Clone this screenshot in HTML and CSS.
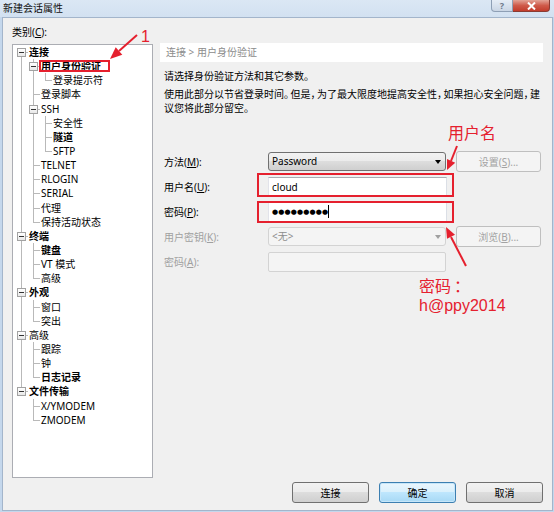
FILE: index.html
```html
<!DOCTYPE html>
<html lang="zh-CN">
<head>
<meta charset="utf-8">
<title>新建会话属性</title>
<link rel="stylesheet" href="styles.css">
</head>
<body>
<div class="win">
  <div class="titlebar">
    <span class="title">新建会话属性</span>
    <div class="caps">
      <span class="cap help">?</span>
      <span class="cap close"><svg width="11" height="8" viewBox="0 0 11 8"><path d="M2 0.5 L9 7.5 M9 0.5 L2 7.5" stroke="#fff" stroke-width="2"/></svg></span>
    </div>
  </div>
  <div class="client">
    <div class="main">
      <div class="left">
        <div class="cat">类别(<u>C</u>):</div>
        <ul class="tree">
          <li><div class="row"><i class="exp"></i><b>连接</b></div>
            <ul>
              <li><div class="row"><i class="exp"></i><b>用户身份验证</b></div>
                <ul>
                  <li><div class="row">登录提示符</div></li>
                </ul>
              </li>
              <li><div class="row">登录脚本</div></li>
              <li><div class="row"><i class="exp"></i>SSH</div>
                <ul>
                  <li><div class="row">安全性</div></li>
                  <li><div class="row"><b>隧道</b></div></li>
                  <li><div class="row">SFTP</div></li>
                </ul>
              </li>
              <li><div class="row">TELNET</div></li>
              <li><div class="row">RLOGIN</div></li>
              <li><div class="row">SERIAL</div></li>
              <li><div class="row">代理</div></li>
              <li><div class="row">保持活动状态</div></li>
            </ul>
          </li>
          <li><div class="row"><i class="exp"></i><b>终端</b></div>
            <ul>
              <li><div class="row"><b>键盘</b></div></li>
              <li><div class="row">VT 模式</div></li>
              <li><div class="row">高级</div></li>
            </ul>
          </li>
          <li><div class="row"><i class="exp"></i><b>外观</b></div>
            <ul>
              <li><div class="row">窗口</div></li>
              <li><div class="row">突出</div></li>
            </ul>
          </li>
          <li><div class="row"><i class="exp"></i>高级</div>
            <ul>
              <li><div class="row">跟踪</div></li>
              <li><div class="row">钟</div></li>
              <li><div class="row"><b>日志记录</b></div></li>
            </ul>
          </li>
          <li><div class="row"><i class="exp"></i><b>文件传输</b></div>
            <ul>
              <li><div class="row">X/YMODEM</div></li>
              <li><div class="row">ZMODEM</div></li>
            </ul>
          </li>
        </ul>
      </div>
      <div class="panel">
        <div class="crumb">连接 &gt; 用户身份验证</div>
        <p class="desc first">请选择身份验证方法和其它参数。</p>
        <p class="desc">使用此部分以节省登录时间<span class="p">。</span>但是<span class="p">，</span>为了最大限度地提高安全性<span class="p">，</span>如果担心安全问题<span class="p">，</span>建<br>议您将此部分留空。</p>
        <div class="form">
          <label>方法(<u>M</u>):</label>
          <div class="combo"><span>Password</span><i class="arrow"></i></div>
          <div class="btn dis">设置(<u>S</u>)...</div>

          <label>用户名(<u>U</u>):</label>
          <div class="input"><span>cloud</span></div>
          <div></div>

          <label>密码(<u>P</u>):</label>
          <div class="input"><span class="pw">●●●●●●●●●</span><i class="caret"></i></div>
          <div></div>

          <label class="dim">用户密钥(<u>K</u>):</label>
          <div class="combo dis"><span>&lt;无&gt;</span><i class="arrow"></i></div>
          <div class="btn dis">浏览(<u>B</u>)...</div>

          <label class="dim">密码(<u>A</u>):</label>
          <div class="box dis"></div>
          <div></div>
        </div>
      </div>
    </div>
    <div class="buttons">
      <div class="btn">连接</div>
      <div class="btn default">确定</div>
      <div class="btn">取消</div>
    </div>
  </div>

  <div class="annot">
    <svg class="marks" width="554" height="512" viewBox="0 0 554 512">
      <g fill="none" stroke="#e5202e" stroke-width="2">
        <rect x="40" y="61" width="69" height="10"/>
        <rect x="258" y="174" width="195" height="22"/>
        <rect x="258" y="202" width="195" height="20"/>
        <line x1="137" y1="35" x2="119" y2="51"/>
        <line x1="457" y1="146" x2="451" y2="161"/>
        <line x1="466" y1="266" x2="451" y2="237"/>
      </g>
      <g fill="#e5202e">
        <polygon points="110,59 122.3,54.7 115.7,47.3"/>
        <polygon points="447,170 455.2,162.8 447,159"/>
        <polygon points="446,227 455,234.7 447,238.8"/>
      </g>
    </svg>
    <div class="note one">1</div>
    <div class="note user">用户名</div>
    <div class="note pwd">密码<span class="colon">：</span><br><span class="lat">h@ppy2014</span></div>
  </div>
</div>
</body>
</html>
```
FILE: styles.css
```css
html, body {
  margin: 0;
  padding: 0;
}
body {
  width: 554px;
  height: 512px;
  overflow: hidden;
  font-family: "Noto Sans", "Noto Sans CJK SC", sans-serif;
  font-size: 10px;
  color: #000;
}
.win {
  width: 554px;
  height: 512px;
  position: relative;
  display: flex;
  flex-direction: column;
  background: #c4d7ec;
}
.titlebar {
  height: 17px;
  flex: none;
  display: flex;
  justify-content: space-between;
  align-items: flex-start;
  background: linear-gradient(#dbe7f4, #d2e1f1);
}
.title {
  padding-left: 3px;
  line-height: 17px;
  color: #111;
}
.caps {
  display: flex;
  margin-right: 4px;
}
.cap {
  height: 12px;
  box-sizing: border-box;
  display: flex;
  align-items: center;
  justify-content: center;
}
.help {
  width: 22px;
  border: 1px solid #8e9fb5;
  border-top: none;
  border-radius: 0 0 0 4px;
  background: linear-gradient(#e6edf6, #cad6e5);
  color: #6d7a8c;
  font-size: 9px;
  font-weight: bold;
  line-height: 10px;
}
.close {
  width: 37px;
  border: 1px solid #8a3b33;
  border-top: none;
  border-left: none;
  border-radius: 0 0 4px 0;
  background: linear-gradient(#e3a396, #cf5a4a 50%, #c23c2c);
}
.client {
  flex: 1;
  margin: 0 1px 1px 2px;
  border: 1px solid #a3b5cb;
  background: #f0f0f0;
  padding: 7px 9px 0 9px;
  display: flex;
  flex-direction: column;
}
.main {
  display: flex;
  gap: 7px;
}
.left {
  width: 141px;
  flex: none;
}
.cat {
  height: 14px;
  line-height: 14px;
  margin-bottom: 5px;
}
.tree, .tree ul {
  list-style: none;
  margin: 0;
  padding: 0;
}
.tree {
  box-sizing: border-box;
  height: 434px;
  background: #fff;
  border: 1px solid #abadb3;
  overflow: hidden;
}
.tree ul {
  margin-left: -4px;
}
.tree li {
  position: relative;
  padding-left: 16px;
}
.tree li::before {
  content: "";
  position: absolute;
  left: 8px;
  top: 0;
  bottom: 0;
  border-left: 1px solid #b9b9b9;
}
.tree li:last-child::before {
  bottom: auto;
  height: 7px;
}
.tree > li:first-child::before {
  top: 7px;
}
.row {
  position: relative;
  height: 14.15px;
  line-height: 14.15px;
  white-space: nowrap;
}
.row::before {
  content: "";
  position: absolute;
  left: -8px;
  top: 7px;
  width: 7px;
  border-top: 1px solid #b9b9b9;
}
.row b {
  font-weight: bold;
}
.exp {
  position: absolute;
  z-index: 1;
  left: -12px;
  top: 3px;
  width: 9px;
  height: 9px;
  box-sizing: border-box;
  border: 1px solid #a2a2a2;
  background: linear-gradient(#fff, #e8e8e8);
}
.exp::after {
  content: "";
  position: absolute;
  left: 1px;
  top: 3px;
  width: 5px;
  height: 1px;
  background: #333;
}
.panel {
  flex: 1;
  margin-top: 18px;
}
.crumb {
  height: 19px;
  line-height: 19px;
  background: #fff;
  padding-left: 6px;
  color: #8c8c8c;
}
.desc {
  margin: 4px 0 0 4px;
  line-height: 14px;
  white-space: nowrap;
}
.desc.first {
  margin-top: 7px;
}
.desc .p {
  letter-spacing: -3.5px;
}
.form {
  margin: 34px 0 0 4px;
  display: grid;
  grid-template-columns: 104px 188px 85px;
  grid-auto-rows: 25px;
  align-items: center;
}
.form label {
  line-height: 14px;
}
.form .dim {
  color: #a0a0a0;
}
.combo {
  width: 178px;
  height: 19px;
  box-sizing: border-box;
  border: 1px solid #707070;
  border-radius: 3px;
  background: linear-gradient(#f2f2f2 0%, #ebebeb 50%, #dddddd 50%, #cfcfcf 100%);
  display: flex;
  align-items: center;
  justify-content: space-between;
  padding: 0 4px 0 3px;
  line-height: 17px;
}
.arrow {
  width: 0;
  height: 0;
  border-left: 3.5px solid transparent;
  border-right: 3.5px solid transparent;
  border-top: 4px solid #000;
}
.combo.dis {
  border-color: #d3d3d3;
  background: #f4f4f4;
  color: #8d8d8d;
}
.combo.dis .arrow {
  border-top-color: #a0a0a0;
}
.input {
  width: 179px;
  height: 20px;
  box-sizing: border-box;
  border: 1px solid;
  border-color: #abadb3 #dbdfe6 #e3e9ef #e2e3ea;
  background: #fff;
  display: flex;
  align-items: center;
  padding-left: 3px;
}
.pw {
  font-family: "DejaVu Sans", sans-serif;
  font-size: 7px;
  letter-spacing: 0.15px;
  line-height: 10px;
}
.caret {
  width: 1px;
  height: 13px;
  background: #000;
  margin-left: 0;
}
.box {
  width: 178px;
  height: 20px;
  box-sizing: border-box;
  border: 1px solid #d3d3d3;
  border-radius: 2px;
  background: #f4f4f4;
}
.btn {
  height: 21px;
  box-sizing: border-box;
  border: 1px solid #707070;
  border-radius: 3px;
  background: linear-gradient(#f2f2f2 0%, #ebebeb 50%, #dddddd 50%, #cfcfcf 100%);
  display: flex;
  align-items: center;
  justify-content: center;
  line-height: 14px;
}
.btn.dis {
  border-color: #bfbfbf;
  background: #f4f4f4;
  color: #a3a3a3;
}
.buttons {
  display: flex;
  justify-content: flex-end;
  gap: 10px;
  margin-top: 4px;
}
.buttons .btn {
  width: 77px;
}
.btn.default {
  border-color: #3c7fb1;
  background: linear-gradient(#eaf6fd 0%, #d9f0fc 50%, #bee6fd 50%, #a7d9f5 100%);
  box-shadow: inset 0 0 0 1px #c6e6f9;
}
.annot {
  position: absolute;
  left: 0;
  top: 0;
  width: 554px;
  height: 512px;
  pointer-events: none;
}
.marks {
  display: block;
}
.note {
  position: absolute;
  color: #e5202e;
  font-size: 16px;
  line-height: 16px;
  white-space: nowrap;
}
.note.one {
  left: 141px;
  top: 29px;
  font-family: "Liberation Sans", sans-serif;
}
.note.user {
  left: 448px;
  top: 125px;
}
.note.pwd {
  left: 419px;
  top: 277px;
  line-height: 19px;
}
.note .colon {
  padding-left: 3px;
}
.note .lat {
  font-family: "Liberation Sans", sans-serif;
}
```
